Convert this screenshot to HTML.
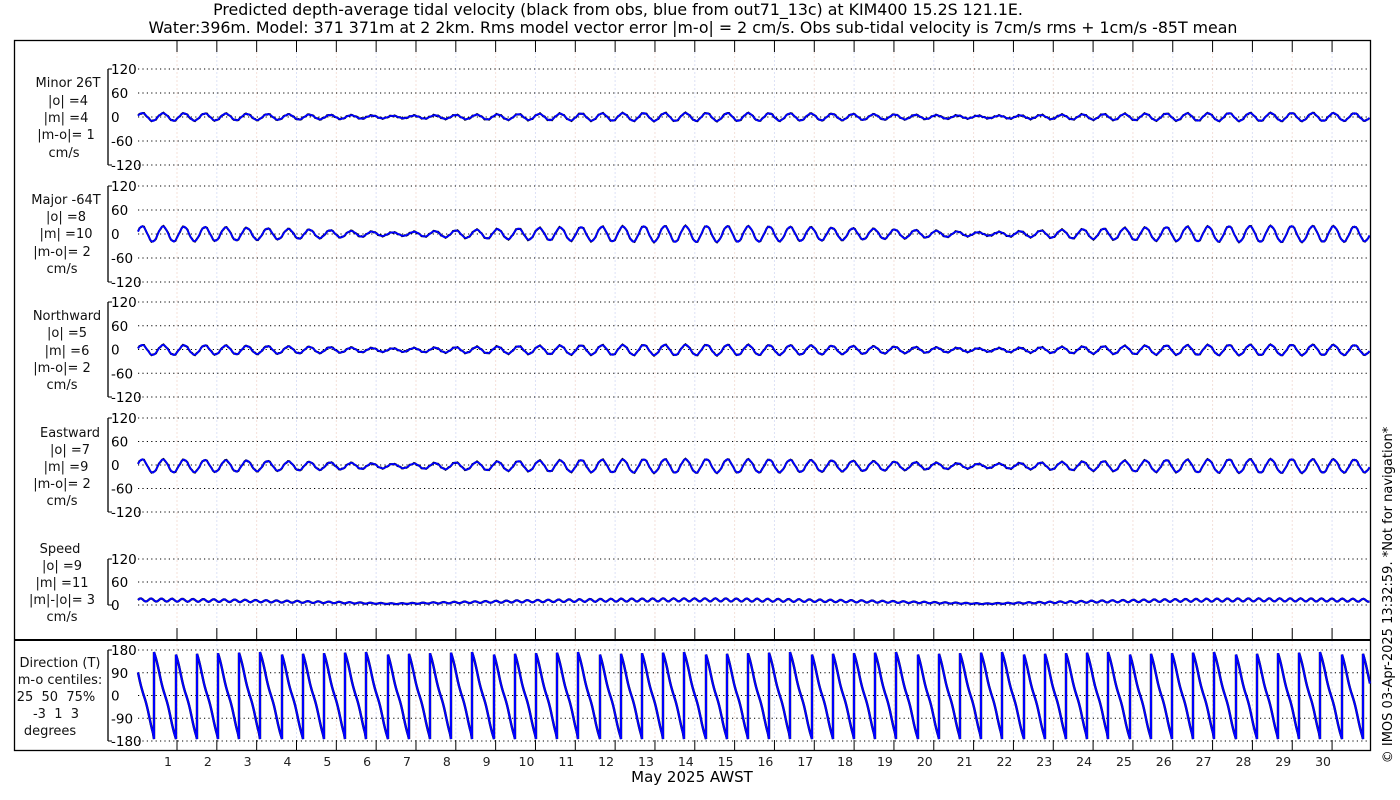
<!DOCTYPE html>
<html><head><meta charset="utf-8"><style>
html,body{margin:0;padding:0;background:#fff;}
svg{display:block;font-family:"DejaVu Sans","Liberation Sans",sans-serif;}
text{white-space:pre;}
</style></head><body>
<svg id="s" width="1400" height="800" xmlns="http://www.w3.org/2000/svg">
<text x="618" y="15" font-size="15.8" text-anchor="middle">Predicted depth-average tidal velocity (black from obs, blue from out71_13c) at KIM400 15.2S 121.1E.</text>
<text x="693" y="33" font-size="15.8" text-anchor="middle">Water:396m. Model: 371 371m at 2 2km. Rms model vector error |m-o| = 2 cm/s. Obs sub-tidal velocity is 7cm/s rms + 1cm/s -85T mean</text>
<g id="g"></g>
<g font-size="13" text-anchor="middle" fill="#111">
<text x="68" y="87">Minor 26T</text><text x="68" y="105">|o| =4</text><text x="66" y="122">|m| =4</text><text x="66" y="139">|m-o|= 1</text><text x="64" y="157">cm/s</text>
<text x="66" y="204">Major -64T</text><text x="66" y="221">|o| =8</text><text x="66" y="238">|m| =10</text><text x="62" y="256">|m-o|= 2</text><text x="62" y="273">cm/s</text>
<text x="67" y="320">Northward</text><text x="67" y="337">|o| =5</text><text x="67" y="355">|m| =6</text><text x="62" y="372">|m-o|= 2</text><text x="62" y="389">cm/s</text>
<text x="70" y="437">Eastward</text><text x="70" y="454">|o| =7</text><text x="66" y="471">|m| =9</text><text x="62" y="488">|m-o|= 2</text><text x="62" y="505">cm/s</text>
<text x="60" y="553">Speed</text><text x="62" y="570">|o| =9</text><text x="62" y="587">|m| =11</text><text x="62" y="604">|m|-|o|= 3</text><text x="62" y="621">cm/s</text>
<text x="60" y="667">Direction (T)</text><text x="60" y="684">m-o centiles:</text><text x="56" y="701">25  50  75%</text><text x="56" y="718">-3  1  3</text><text x="50" y="735">degrees</text>
</g>
<text x="692" y="782" font-size="15" text-anchor="middle">May 2025 AWST</text>
<text transform="translate(1392,595) rotate(-90)" font-size="13" text-anchor="middle">© IMOS 03-Apr-2025 13:32:59. *Not for navigation*</text>
</svg>
<script>
var g=document.getElementById('g'),h='';
var L=138,R=1370,X0=177,DX=39.83;
function line(x1,y1,x2,y2,st){h+='<line x1="'+x1+'" y1="'+y1+'" x2="'+x2+'" y2="'+y2+'" '+st+'/>';}
for(var k=0;k<30;k++){var x=X0+k*DX;line(x,52,x,740,'stroke="'+(k%2?'#dde2f6':'#f4e0da')+'" stroke-width="1" stroke-dasharray="2,2"');}
var P=[{t:69,b:165,lab:[120,60,0,-60,-120],z:117},{t:186,b:282,lab:[120,60,0,-60,-120],z:234},{t:302,b:397,lab:[120,60,0,-60,-120],z:350},{t:418,b:512,lab:[120,60,0,-60,-120],z:466},{t:559,b:605,lab:[120,60,0],z:605},{t:650,b:741,lab:[180,90,0,-90,-180],z:696}];
P.forEach(function(p){var n=p.lab.length;
 line(108,p.t,108,p.b,'stroke="#000" stroke-width="1.3"');line(108,p.t,112,p.t,'stroke="#000"');line(108,p.b,112,p.b,'stroke="#000"');
 for(var i=0;i<n;i++){var y=p.t+(p.b-p.t)*i/(n-1);
  line(138,y,1370,y,'stroke="#000" stroke-width="1" stroke-dasharray="1.2,3.2"');
  h+='<text x="111" y="'+(y+5)+'" font-size="13.5">'+p.lab[i]+'</text>';}
});
h+='<rect x="14.5" y="40.5" width="1356" height="710" fill="none" stroke="#000" stroke-width="1.3"/>';
line(14,640,1371,640,'stroke="#000" stroke-width="2"');
for(var k=0;k<30;k++){var x=X0+k*DX;line(x,40,x,52,'stroke="#000"');line(x,628,x,640,'stroke="#000"');line(x,740,x,751,'stroke="#000"');
 h+='<text x="'+(x-9)+'" y="766" font-size="12.5" text-anchor="middle" fill="#222">'+(k+1)+'</text>';}
var per=20.9;
function env(x,a){return a[0]+a[1]*Math.abs(Math.cos((x-L)/ (14.8*DX)*Math.PI+a[2]));}
function wave(z,a,ph,col,w,off){var d='';for(var x=L;x<=R;x+=1.5){var y=z-0.4*env(x,a)*Math.sin(2*Math.PI*(x-L)/per+ph)+off*Math.sin(x*1.3);d+=(x==L?'M':'L')+x.toFixed(1)+','+y.toFixed(1);}h+='<path d="'+d+'" fill="none" stroke="'+col+'" stroke-width="'+w+'"/>';}
var A=[[3,7,0.2],[4,16,0.2],[4,9,0.2],[5,12,0.2]];
for(var i=0;i<4;i++){wave(P[i].z,A[i],0.3,'#000',2,0.6);wave(P[i].z,A[i],0.3,'#0000ff',1.8,0);}
(function(){var d='';for(var x=L;x<=R;x+=1.5){var e=env(x,[4,12,0.2]);var y=605-0.4*(e*0.8+e*0.25*Math.sin(2*Math.PI*(x-L)/(per/2)));d+=(x==L?'M':'L')+x.toFixed(1)+','+y.toFixed(1);}
h+='<path d="'+d+'" fill="none" stroke="#000" stroke-width="2.2"/><path d="'+d+'" fill="none" stroke="#0000ff" stroke-width="1.8"/>';})();
var prevf=0;
(function(){var d='',sc=91/360,first=true,ph=0.25;
for(var x=L;x<=R;x+=1){var f=((x-L)/21.2+ph)%1;var dir=175-f*330+6*Math.sin(f*12);var y=696-dir*sc;
 if(!first && f<prevf){d+='L'+x+','+(696-(-170)*sc).toFixed(1)+'L'+x+','+y.toFixed(1);}else d+=(first?'M':'L')+x+','+y.toFixed(1);first=false;prevf=f;}
h+='<path d="'+d+'" fill="none" stroke="#000" stroke-width="2.4"/><path d="'+d+'" fill="none" stroke="#0000ff" stroke-width="2"/>';})();
g.innerHTML=h;
</script>
</body></html>
